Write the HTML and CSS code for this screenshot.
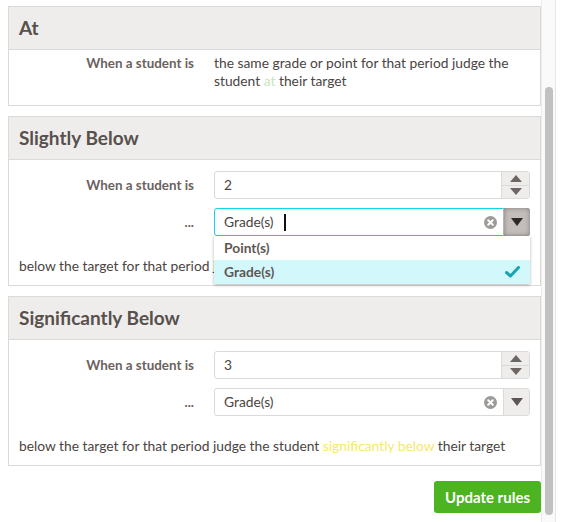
FILE: index.html
```html
<!DOCTYPE html>
<html>
<head>
<meta charset="utf-8">
<link rel="stylesheet" href="styles.css">
</head>
<body>
<div class="frame">
  <div class="content">
    <section class="panel">
      <div class="panel-head">At</div>
      <div class="panel-body at-body">
        <div class="row">
          <div class="label">When a student is</div>
          <div class="desc">the same grade or point for that period judge the student <span class="hl-green">at</span> their target</div>
        </div>
      </div>
    </section>

    <section class="panel">
      <div class="panel-head">Slightly Below</div>
      <div class="panel-body">
        <div class="row">
          <div class="label">When a student is</div>
          <div class="num">
            <span class="num-val">2</span>
            <span class="spin">
              <span class="spin-btn"><svg width="12" height="7" viewBox="0 0 12 7"><path d="M0 7 L6 0 L12 7 Z" fill="#6e6663"/></svg></span>
              <span class="spin-btn"><svg width="12" height="7" viewBox="0 0 12 7"><path d="M0 0 L6 7 L12 0 Z" fill="#6e6663"/></svg></span>
            </span>
          </div>
        </div>
        <div class="row">
          <div class="label">...</div>
          <div class="select-wrap">
            <div class="select focused">
              <span class="sel-val">Grade(s)</span><span class="caret"></span>
              <span class="clear"><svg width="13" height="13" viewBox="0 0 13 13"><circle cx="6.5" cy="6.5" r="6.5" fill="#9e9a98"/><path d="M4.2 4.2 L8.8 8.8 M8.8 4.2 L4.2 8.8" stroke="#fff" stroke-width="2" stroke-linecap="round"/></svg></span>
              <span class="arrow"><svg width="12" height="8" viewBox="0 0 12 8"><path d="M0 0 L12 0 L6 8 Z" fill="#2e2a29"/></svg></span>
            </div>
            <ul class="menu">
              <li class="opt">Point(s)</li>
              <li class="opt active">Grade(s)<svg class="check" width="15" height="12" viewBox="0 0 15 12"><path d="M1.5 6.5 L5.5 10 L13.5 1.5" fill="none" stroke="#1ba3b5" stroke-width="3" stroke-linecap="round" stroke-linejoin="round"/></svg></li>
            </ul>
          </div>
        </div>
        <p class="foot">below the target for that period judge the student <span class="hl-yellow">slightly below</span> their target</p>
      </div>
    </section>

    <section class="panel">
      <div class="panel-head">Significantly Below</div>
      <div class="panel-body">
        <div class="row">
          <div class="label">When a student is</div>
          <div class="num">
            <span class="num-val">3</span>
            <span class="spin">
              <span class="spin-btn"><svg width="12" height="7" viewBox="0 0 12 7"><path d="M0 7 L6 0 L12 7 Z" fill="#6e6663"/></svg></span>
              <span class="spin-btn"><svg width="12" height="7" viewBox="0 0 12 7"><path d="M0 0 L6 7 L12 0 Z" fill="#6e6663"/></svg></span>
            </span>
          </div>
        </div>
        <div class="row">
          <div class="label">...</div>
          <div class="select">
            <span class="sel-val">Grade(s)</span>
            <span class="clear"><svg width="13" height="13" viewBox="0 0 13 13"><circle cx="6.5" cy="6.5" r="6.5" fill="#9e9a98"/><path d="M4.2 4.2 L8.8 8.8 M8.8 4.2 L4.2 8.8" stroke="#fff" stroke-width="2" stroke-linecap="round"/></svg></span>
            <span class="arrow"><svg width="12" height="8" viewBox="0 0 12 8"><path d="M0 0 L12 0 L6 8 Z" fill="#5e5754"/></svg></span>
          </div>
        </div>
        <p class="foot">below the target for that period judge the student <span class="hl-yellow">significantly below</span> their target</p>
      </div>
    </section>

    <div class="actions">
      <button class="btn">Update rules</button>
    </div>
  </div>
  <div class="scrollbar"><div class="thumb"></div></div>
</div>
</body>
</html>
```

FILE: styles.css
```css
* { box-sizing: border-box; }
html, body { margin: 0; padding: 0; background: #fff; }
body {
  font-family: Lato, "Noto Sans", sans-serif;
  font-size: 13.8px;
  color: #4a4442;
}
.frame {
  display: flex;
  width: 562px;
  height: 522px;
  overflow: hidden;
}
.content {
  width: 541px;
  padding: 6px 0 0 8px;
  flex: none;
}
.panel {
  border: 1px solid #dcdad8;
  margin-bottom: 10px;
  background: #fff;
}
.panel-head {
  height: 43px;
  background: #efedeb;
  border-bottom: 1px solid #dcdad8;
  padding: 0 10px;
  font-size: 19px;
  font-weight: 700;
  color: #57504d;
  line-height: 42px;
}
.panel-body {
  padding: 11px 10px 10px 10px;
}
.at-body { padding: 4px 10px 15px 10px; }
.row {
  display: grid;
  grid-template-columns: 175px 1fr;
  column-gap: 20px;
  align-items: center;
  margin-bottom: 9px;
}
.at-body .row { align-items: start; margin-bottom: 0; }
.label {
  text-align: right;
  font-weight: 700;
  font-size: 13.4px;
  color: #6a625f;
  line-height: 18px;
}
.desc { line-height: 18px; color: #4a4442; }
.hl-green { color: #c9e5c1; }
.hl-yellow { color: #f6e96a; }
.num, .select {
  height: 28px;
  border: 1px solid #dcdad8;
  border-radius: 3px;
  display: flex;
  align-items: center;
  background: #fff;
}
.num-val, .sel-val { padding-left: 9px; flex: 1; line-height: 18px; }
.select .sel-val { flex: none; }
.caret {
  width: 2px;
  height: 17px;
  background: #111;
  margin-left: 10px;
}
.select .clear { margin-left: auto; margin-right: 6px; display: flex; }
.spin {
  width: 28px;
  align-self: stretch;
  display: flex;
  flex-direction: column;
  background: #efedeb;
  border-left: 1px solid #dcdad8;
  border-radius: 0 3px 3px 0;
}
.spin-btn {
  flex: 1;
  display: flex;
  align-items: center;
  justify-content: center;
}
.spin-btn + .spin-btn { border-top: 1px solid #dcdad8; }
.arrow {
  width: 26px;
  align-self: stretch;
  display: flex;
  align-items: center;
  justify-content: center;
  background: #efedeb;
  border-left: 1px solid #dcdad8;
  border-radius: 0 2px 2px 0;
}
.select-wrap { position: relative; }
.select.focused {
  border-color: #10d6ea;
}
.select.focused .arrow {
  background: #c3bebb;
  border-left-color: #b9b4b1;
  box-shadow: inset 0 0 5px rgba(0,0,0,0.35);
  margin: -1px -1px -1px 0;
  width: 27px;
  border-radius: 0 3px 3px 0;
}
.menu {
  position: absolute;
  left: 0;
  right: 0;
  top: 28px;
  margin: 0;
  padding: 0;
  list-style: none;
  background: #fff;
  box-shadow: 0 1px 3px rgba(0,0,0,0.3);
  z-index: 5;
}
.opt {
  height: 24px;
  line-height: 24px;
  padding-left: 10px;
  font-weight: 700;
  color: #5f5754;
  display: flex;
  align-items: center;
}
.opt.active { background: #d3f8fc; }
.check { margin-left: auto; margin-right: 10px; }
.foot {
  margin: 21px 0 0 0;
  line-height: 18px;
  color: #4a4442;
}
.actions {
  display: flex;
  justify-content: flex-end;
  padding-top: 5px;
}
.btn {
  font-family: Lato, "Noto Sans", sans-serif;
  background: #4cb421;
  color: #fff;
  border: none;
  border-radius: 3px;
  height: 32px;
  width: 107px;
  font-size: 15px;
  font-weight: 700;
  padding: 0;
}
.scrollbar {
  width: 15px;
  flex: none;
  background: #fafafa;
  border-left: 1px solid #ececec;
  border-right: 1px solid #e6e6e6;
  padding: 87px 2px 0 3px;
}
.thumb {
  width: 8px;
  height: 428px;
  background: #c1c1c1;
  border-radius: 4px;
}
```
